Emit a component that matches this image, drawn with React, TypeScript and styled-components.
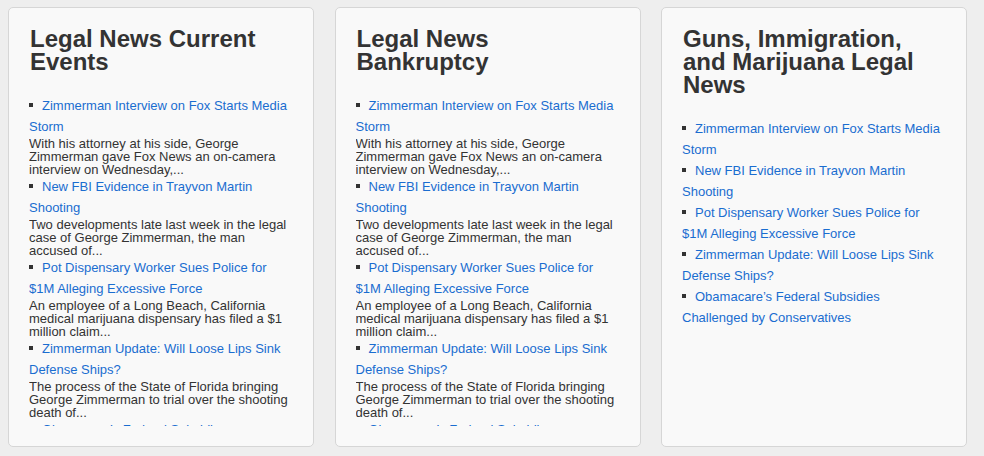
import React from "react";
import styled, { createGlobalStyle } from "styled-components";

const Global = createGlobalStyle`
  html, body { margin: 0; padding: 0; background: #eeeeee; }
  body { font-family: "Liberation Sans", Arial, sans-serif; }
`;

const Page = styled.div`
  display: flex;
  gap: 20.5px;
  padding: 7px 0 0 8px;
  height: 456px;
  box-sizing: border-box;
`;

const Card = styled.section`
  box-sizing: border-box;
  width: 306px;
  height: 440px;
  background: #f9f9f9;
  border: 1px solid #d6d6d6;
  border-radius: 5px;
  padding: 19px 21px 20px 20px;
  display: flex;
  flex-direction: column;
`;

const Title = styled.h2`
  margin: 0 0 22px 1px;
  font-size: 24px;
  line-height: 23px;
  font-weight: bold;
  color: #333333;
`;

const Scroll = styled.div`
  flex: 1;
  overflow: hidden;
  min-height: 0;
`;

const List = styled.ul`
  margin: 0;
  padding: 0;
  list-style: none;
  color: #333333;
`;

const Item = styled.li`
  font-size: 13px;
  line-height: 21px;

  &::before {
    content: "";
    display: inline-block;
    width: 4px;
    height: 4px;
    background: #333333;
    margin-right: 9px;
    vertical-align: 3px;
  }
`;

const Link = styled.a`
  color: #1a6dd0;
  text-decoration: none;
`;

const Excerpt = styled.div`
  font-size: 13px;
  line-height: 13px;
  color: #333333;
`;

type Story = { title: string; excerpt: string };

const stories: Story[] = [
  {
    title: "Zimmerman Interview on Fox Starts Media Storm",
    excerpt:
      "With his attorney at his side, George Zimmerman gave Fox News an on-camera interview on Wednesday,...",
  },
  {
    title: "New FBI Evidence in Trayvon Martin Shooting",
    excerpt:
      "Two developments late last week in the legal case of George Zimmerman, the man accused of...",
  },
  {
    title: "Pot Dispensary Worker Sues Police for $1M Alleging Excessive Force",
    excerpt:
      "An employee of a Long Beach, California medical marijuana dispensary has filed a $1 million claim...",
  },
  {
    title: "Zimmerman Update: Will Loose Lips Sink Defense Ships?",
    excerpt:
      "The process of the State of Florida bringing George Zimmerman to trial over the shooting death of...",
  },
  {
    title: "Obamacare’s Federal Subsidies Challenged by Conservatives",
    excerpt:
      "A group of conservative lawyers is challenging the federal subsidies offered under the health law...",
  },
];

const Column: React.FC<{ title: string; excerpts: boolean }> = ({ title, excerpts }) => (
  <Card>
    <Title>{title}</Title>
    <Scroll>
      <List>
        {stories.map((s) => (
          <Item key={s.title}>
            <Link href="#">{s.title}</Link>
            {excerpts && <Excerpt>{s.excerpt}</Excerpt>}
          </Item>
        ))}
      </List>
    </Scroll>
  </Card>
);

export default function App() {
  return (
    <>
      <Global />
      <Page>
        <Column title="Legal News Current Events" excerpts />
        <Column title="Legal News Bankruptcy" excerpts />
        <Column title="Guns, Immigration, and Marijuana Legal News" excerpts={false} />
      </Page>
    </>
  );
}
